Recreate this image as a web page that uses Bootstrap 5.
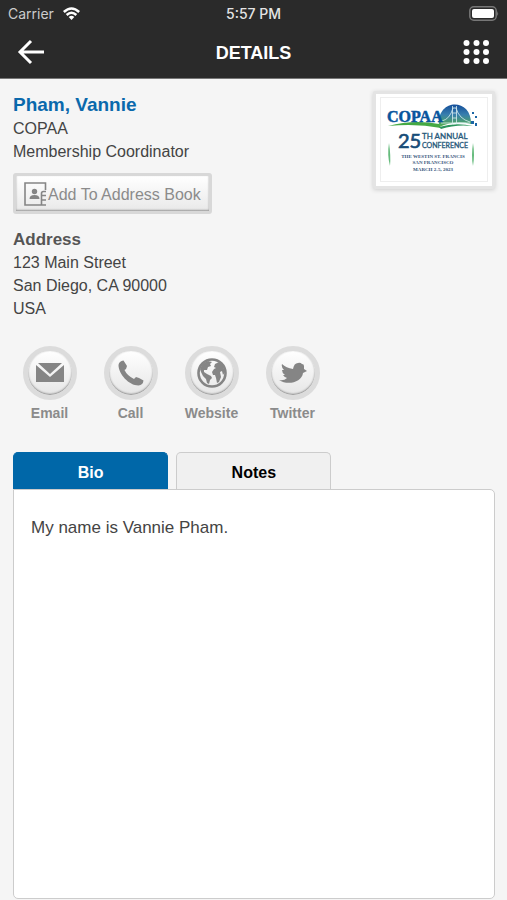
<!DOCTYPE html>
<html lang="en">
<head>
<meta charset="utf-8">
<meta name="viewport" content="width=device-width, initial-scale=1">
<title>Details</title>
<link href="https://cdn.jsdelivr.net/npm/bootstrap@5.3.0/dist/css/bootstrap.min.css" rel="stylesheet">
<style>
  body { background: #f5f5f5; color: #444; font-family: "Liberation Sans", Arial, sans-serif; font-size: 16px; line-height: 23px; }
  address { line-height: 23px; }
  .app-head { background: #2a2a2a; color: #fff; border-bottom: 1px solid #777; }
  .side { flex: 1 0 0; }
  .status { height: 27px; padding: 0 8px; font: 500 14px/27px Inter, sans-serif; color: #e4e4e4; }
  .carrier { font-weight: 400; color: #ccc; }
  .title-bar { height: 51px; padding: 0 16px 2px; }
  .title-bar h1 { font-size: 18px; line-height: 24px; padding-top: 2px; }
  .content { padding: 13px 12px 0 13px; }
  .person { font-size: 19px; line-height: 25px; color: #0a69ac; }
  .contact-btn { height: 41px; padding: 2px 8px 0 7px; border: 3px solid #d8d8d8; border-radius: 3px; background: linear-gradient(#fff, #e9e9e9); box-shadow: inset 0 -1px 2px #999; color: #8b8b8b; margin-top: 10px; }
  .logo-frame { width: 122px; background: #fff; border: 3px solid #e4e4e4; border-radius: 2px; box-shadow: 0 1px 4px #ccc; margin-top: -1px; }
  .address { margin-top: 14px; }
  .address h2 { font-size: 17px; line-height: 23px; color: #555; }
  .actions { margin-top: 26px; }
  .action { width: 73px; color: #8b8b8b; font-size: 14px; line-height: 20px; }
  .disc { width: 54px; height: 54px; border: 5px solid #dcdcdc; background: linear-gradient(#fff, #e6e6e6); box-shadow: inset 0 -1px 2px #888; margin-bottom: 3px; }
  .tabs { margin-top: 29px; }
  .tab-btn { width: 32.2%; height: 37px; border: 1px solid #ccc; border-bottom: 0; border-radius: 5px 5px 0 0; background: #f0f0f0; color: #000; font-weight: 700; padding-top: 3px; }
  .tab-btn.active { background: #0067a8; border-color: #0067a8; color: #fff; }
  .panel { background: #fff; border: 1px solid #ccc; border-radius: 0 5px 5px 5px; padding: 26px 17px; margin-bottom: 1px; font-size: 17px; }
</style>
</head>
<body class="min-vh-100 d-flex flex-column">
<header class="app-head">
  <div class="status d-flex align-items-center">
    <div class="side d-flex align-items-center gap-2">
      <span class="carrier">Carrier</span>
      <svg width="19" height="14" viewBox="0 0 20 15" fill="none" stroke="#fff" stroke-width="2.7" aria-hidden="true"><path d="M1.8 5.3Q10-2.2 18.2 5.3M4.8 8.6Q10 3.800 15.2 8.6"/><path d="M7 10.6Q10 8 13 10.6L10 13.8Z" fill="#fff" stroke="none"/></svg>
    </div>
    <span>5:57 PM</span>
    <div class="side d-flex justify-content-end">
      <svg width="30" height="15" viewBox="0 0 30 15" aria-hidden="true"><rect x=".8" y=".8" width="26.4" height="13.4" rx="4" fill="#2a2a2a" stroke="#777" stroke-width="1.5"/><rect x="3" y="3" width="22" height="9" rx="2" fill="#fff"/><path d="M28.2 5q1.8 2.5 0 5Z" fill="#777"/></svg>
    </div>
  </div>
  <div class="title-bar d-flex align-items-center">
    <div class="side"><button class="btn p-0 border-0 d-flex" type="button" aria-label="Back"><svg width="30" height="26" viewBox="0 0 30 26" fill="none" stroke="#fff" stroke-width="3"><path d="M28 13H4M15 2L4 13L15 24"/></svg></button></div>
    <h1 class="fw-bold mb-0">DETAILS</h1>
    <div class="side d-flex justify-content-end"><button class="btn p-0 border-0 d-flex" type="button" aria-label="Menu"><svg width="28" height="26" viewBox="0 0 28 26" fill="#fff"><circle cx="3.500" cy="4" r="3"/><circle cx="13.500" cy="4" r="3"/><circle cx="23" cy="4" r="3"/><circle cx="3.500" cy="13" r="3"/><circle cx="13.500" cy="13" r="3"/><circle cx="23" cy="13" r="3"/><circle cx="3.500" cy="22" r="3"/><circle cx="13.500" cy="22" r="3"/><circle cx="23" cy="22" r="3"/></svg></button></div>
  </div>
</header>
<main class="content flex-grow-1 d-flex flex-column">
  <div class="d-flex justify-content-between align-items-start">
    <div>
      <h2 class="person fw-bold mb-0">Pham, Vannie</h2>
      <div>COPAA</div>
      <div>Membership Coordinator</div>
      <button type="button" class="contact-btn d-flex align-items-center">
        <svg width="25" height="26" viewBox="0 0 24 26" fill="none" stroke="#858585" stroke-width="1.600" aria-hidden="true"><path d="M18 23H1.500V1H22V8M18 23V11.500Q18 9.500 20 9.500H22.500M18 13.500H22.500M18 18H22.500M18 23H22.500"/><circle cx="11" cy="9.500" r="2.700" fill="#858585" stroke="none"/><path d="M6 17Q6 13 11 13T16 17Z" fill="#858585" stroke="none"/></svg>
        <span>Add To Address Book</span>
      </button>
    </div>
    <div class="logo-frame">
      <svg class="d-block w-100" viewBox="0 0 116 92" role="img" aria-label="COPAA 25th Annual Conference">
        <defs><linearGradient id="dome" x2="0" y2="1"><stop stop-color="#154f9b"/><stop offset=".45" stop-color="#387fae"/><stop offset="1" stop-color="#58b247"/></linearGradient></defs>
        <rect x="4.500" y="3.500" width="107" height="84" fill="none" stroke="#eee"/>
        <path d="M63 31C61 4 96 4 95 30Q79 26 63 33Z" fill="url(#dome)"/>
        <path d="M76.500 12V31M80.500 12V31M76.500 14H80.500M76.500 19H80.500M76.500 24H80.500M66 27Q74 25 77 14M80 14Q83 25 94 28M65 29H94" fill="none" stroke="#d8edf1" stroke-width=".8"/>
        <path d="M12 32Q38 25 63 30L65 34Q40 29 12 32Z" fill="#45a943"/>
        <path d="M63 33Q80 28 97 32Q80 30 65 35Z" fill="#2b955c"/>
        <path d="M96 18h2v2h-2zM99 22h2v2h-2zM95 27h3v3h-3zM99 29h2v3h-2z" fill="#1b66a5"/>
        <text x="11" y="28" font-family="Liberation Serif, serif" font-size="16" font-weight="700" fill="#08559d" stroke="#08559d" stroke-width=".5">COPAA</text>
        <text x="22" y="54" font-family="Lato, sans-serif" font-size="20" font-weight="400" fill="#174d78" stroke="#174d78" stroke-width=".7">25</text>
        <g font-family="Lato, sans-serif" font-size="8" fill="#245879" stroke="#245879" stroke-width=".3"><text x="46" y="45">TH ANNUAL</text><text x="46" y="54" font-size="7">CONFERENCE</text></g>
        <g font-family="Liberation Serif, serif" font-size="5" font-weight="700" fill="#36567c" text-anchor="middle"><text x="57" y="64" font-size="5">THE WESTIN ST. FRANCIS</text><text x="57" y="70">SAN FRANCISCO</text><text x="57" y="77">MARCH 2-5, 2023</text></g>
        <path d="M13 49Q11 61 14 72Q15 62 13 49M97 49Q99 61 97 72Q95 62 97 49" fill="#65bb7c"/>
      </svg>
    </div>
  </div>
  <section class="address">
    <h2 class="fw-bold mb-0">Address</h2>
    <address class="mb-0">123 Main Street<br>San Diego, CA 90000<br>USA</address>
  </section>
  <nav class="actions d-flex gap-2 fw-bold" aria-label="Contact">
    <a href="#email" class="action text-decoration-none d-flex flex-column align-items-center"><span class="disc rounded-circle d-flex align-items-center justify-content-center"><svg width="28" height="20" viewBox="0 0 28 20"><path fill="#858585" d="M0 2L14 14L28 2V19H0ZM2 0H26L14 11Z"/></svg></span>Email</a>
    <a href="#call" class="action text-decoration-none d-flex flex-column align-items-center"><span class="disc rounded-circle d-flex align-items-center justify-content-center"><svg width="26" height="26" viewBox="0 0 26 26"><path fill="#858585" d="M5.500.5L9 6L8 9L6.500 10Q9 15.500 16 19L18 17L21 18L25.500 20.500Q25 25 20.500 25.500C11 25.500.5 14 .5 5Q1 1 5.500.5Z"/></svg></span>Call</a>
    <a href="#website" class="action text-decoration-none d-flex flex-column align-items-center"><span class="disc rounded-circle d-flex align-items-center justify-content-center"><svg width="30" height="30" viewBox="0 0 30 30"><circle cx="15" cy="15" r="13.500" fill="none" stroke="#858585" stroke-width="2.600"/><path fill="#858585" d="M3 11Q5 5 11 3L15 4L13 6L14 8L11 9L10 12L7 12L7 14L10 16L14 18L15 20L13 22L12 26L10 25L9 21L6 18L4 14ZM18 6L20 5L22 4L26 8L28 14L26 17L25 13L23 14L24 19L22 24L20 25L19 20L18 17L16 17L15 14L17 11L19 10L17 9Z"/></svg></span>Website</a>
    <a href="#twitter" class="action text-decoration-none d-flex flex-column align-items-center"><span class="disc rounded-circle d-flex align-items-center justify-content-center"><svg width="30" height="22" viewBox="0 0 30 22"><path fill="#858585" d="M1 18Q6 19 9 16Q6 15 5 13H7Q4 11 4 8L6 8Q3 5 4 2Q8 6 15 7Q16 1 20 1Q22 0 24 2Q26 2 26 4L26 7L29 9L25 11C24 20 10 24 1 18Z"/></svg></span>Twitter</a>
  </nav>
  <div class="tabs d-flex gap-2" role="tablist">
    <button class="tab-btn active" id="bio-tab" data-bs-toggle="tab" data-bs-target="#bio" type="button" role="tab" aria-controls="bio" aria-selected="true">Bio</button>
    <button class="tab-btn" id="notes-tab" data-bs-toggle="tab" data-bs-target="#notes" type="button" role="tab" aria-controls="notes" aria-selected="false">Notes</button>
  </div>
  <div class="panel tab-content flex-grow-1">
    <div class="tab-pane show active" id="bio" role="tabpanel" aria-labelledby="bio-tab">My name is Vannie Pham.</div>
    <div class="tab-pane" id="notes" role="tabpanel" aria-labelledby="notes-tab"></div>
  </div>
</main>
<script src="https://cdn.jsdelivr.net/npm/bootstrap@5.3.0/dist/js/bootstrap.bundle.min.js"></script>
</body>
</html>
